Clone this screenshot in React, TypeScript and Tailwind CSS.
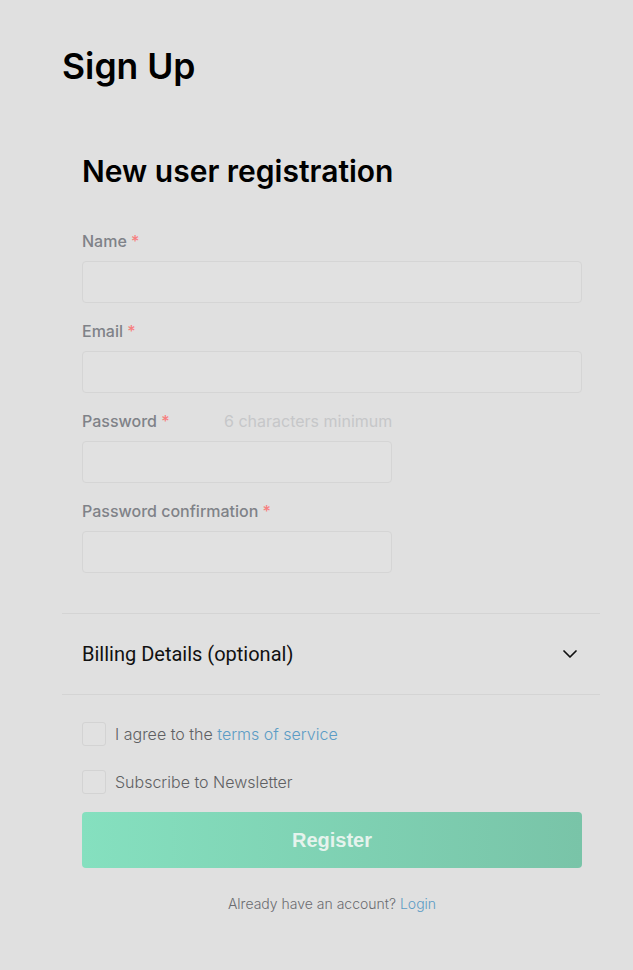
import { ChevronDown } from 'lucide-react';

interface IField {
  label: string;
  hint?: string;
  short?: boolean;
}

function Field({ label, hint, short = false }: IField) {
  return (
    <div className="flex flex-col">
      <div className="flex items-center h-5 text-[16px]">
        <span className={`font-medium text-[#7f8288] ${hint ? 'w-[142px]' : ''}`}>
          {label} <span className="text-[#f77f7f]">*</span>
        </span>
        {hint && <span className="text-[#c6c7c9]">{hint}</span>}
      </div>
      <input
        type="text"
        className={`mt-[10px] h-[42px] rounded-[4px] border border-[#d5d5d5] bg-[#e1e1e1] outline-none ${
          short ? 'w-[310px]' : 'w-full'
        }`}
      />
    </div>
  );
}

function Checkbox({ children }: { children: React.ReactNode }) {
  return (
    <label className="flex items-center h-6">
      <span className="w-6 h-6 rounded-[3px] border border-[#d3d3d3] bg-[#e1e1e1]" />
      <span className="ml-[9px] text-[16px] font-light text-[#5f6063]">{children}</span>
    </label>
  );
}

export default function App() {
  return (
    <div
      className="min-h-screen bg-[#e0e0e0] pl-[62px] pr-[33px] pt-[45px]"
      style={{ fontFamily: 'Inter, "Noto Sans", sans-serif' }}
    >
      <h1 className="text-[35.5px] leading-[44px] font-semibold text-black">Sign Up</h1>

      <div className="mt-[64px]">
        {/* Form header and fields */}
        <div className="pl-5 pr-[18px]">
          <h2 className="text-[30px] leading-[36px] font-semibold text-black">
            New user registration
          </h2>
          <div className="mt-[42px] flex flex-col gap-[18px]">
            <Field label="Name" />
            <Field label="Email" />
            <Field label="Password" hint="6 characters minimum" short />
            <Field label="Password confirmation" short />
          </div>
        </div>

        {/* Billing accordion */}
        <div className="mt-10 border-y border-[#d4d4d4] h-[82px] pl-5 pr-[18px] flex items-center justify-between">
          <span
            className="text-[20px] text-[#111]"
            style={{ fontFamily: 'Roboto, sans-serif' }}
          >
            Billing Details (optional)
          </span>
          <ChevronDown size={24} strokeWidth={1.75} className="text-[#111]" />
        </div>

        {/* Agreement and submit */}
        <div className="pl-5 pr-[18px] pt-[27px]">
          <div className="flex flex-col gap-6">
            <Checkbox>
              I agree to the <span className="text-[#5c9cc5]">terms of service</span>
            </Checkbox>
            <Checkbox>Subscribe to Newsletter</Checkbox>
          </div>
          <button
            className="mt-[18px] w-full h-[56px] rounded-[4px] bg-linear-to-r from-[#85e0bf] to-[#79c4a8] text-[20px] font-bold text-[#e5f3ed]"
            style={{ fontFamily: '"Liberation Sans", Arial, sans-serif' }}
          >
            Register
          </button>
          <p className="mt-[26px] text-center text-[14px] font-light text-[#6b6c70] leading-5">
            Already have an account? <span className="text-[#5c9cc5]">Login</span>
          </p>
        </div>
      </div>
    </div>
  );
}
